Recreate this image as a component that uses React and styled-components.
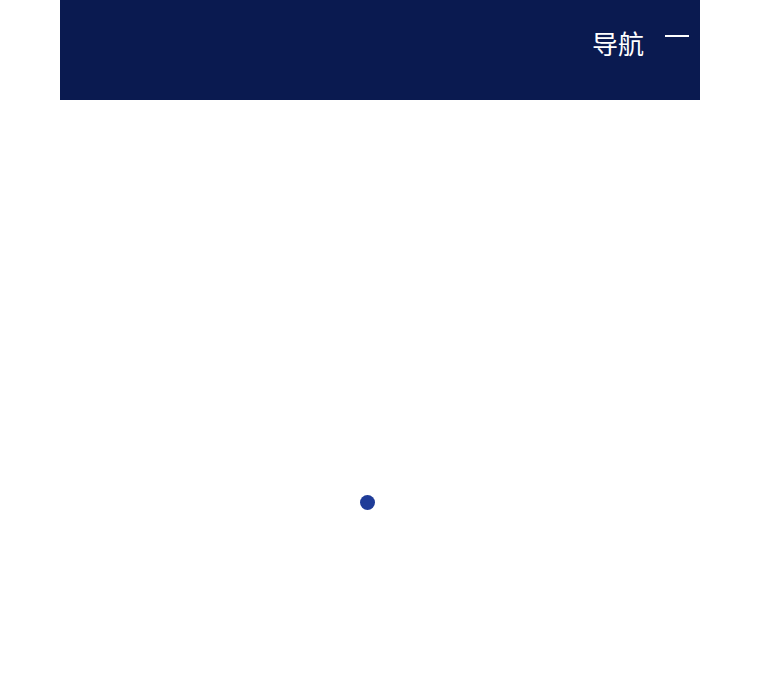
import React from 'react'
import styled, { createGlobalStyle } from 'styled-components'

const GlobalStyle = createGlobalStyle`
  html, body {
    margin: 0;
    padding: 0;
    background: #ffffff;
    font-family: "Noto Sans CJK SC", "Liberation Sans", sans-serif;
  }
`

function App() {
  return (
    <>
      <GlobalStyle />
      <Page>
        <Header>
          <Title>导航</Title>
          <MenuToggle aria-label="menu">
            <Bar />
          </MenuToggle>
        </Header>
        <Content>
          <Dot />
        </Content>
      </Page>
    </>
  )
}

export default App

const Page = styled.div`
  width: 640px;
  margin-left: 60px;
`

const Header = styled.header`
  height: 100px;
  background-color: #0a1a50;
  display: flex;
  justify-content: flex-end;
  align-items: flex-start;
  padding-top: 25px;
  padding-right: 11px;
  box-sizing: border-box;
`

const Title = styled.div`
  color: #ffffff;
  font-size: 26px;
  line-height: 36px;
  margin-right: 21px;
`

const MenuToggle = styled.div`
  width: 24px;
  height: 16px;
  display: flex;
  align-items: flex-start;
  padding-top: 10px;
  cursor: pointer;
`

const Bar = styled.span`
  display: block;
  width: 24px;
  height: 2px;
  background: #ffffff;
`

const Content = styled.main`
  height: 600px;
  padding-top: 395px;
  padding-left: 300px;
  box-sizing: border-box;
`

const Dot = styled.div`
  width: 15px;
  height: 15px;
  border-radius: 50%;
  background: #1f3c98;
`
